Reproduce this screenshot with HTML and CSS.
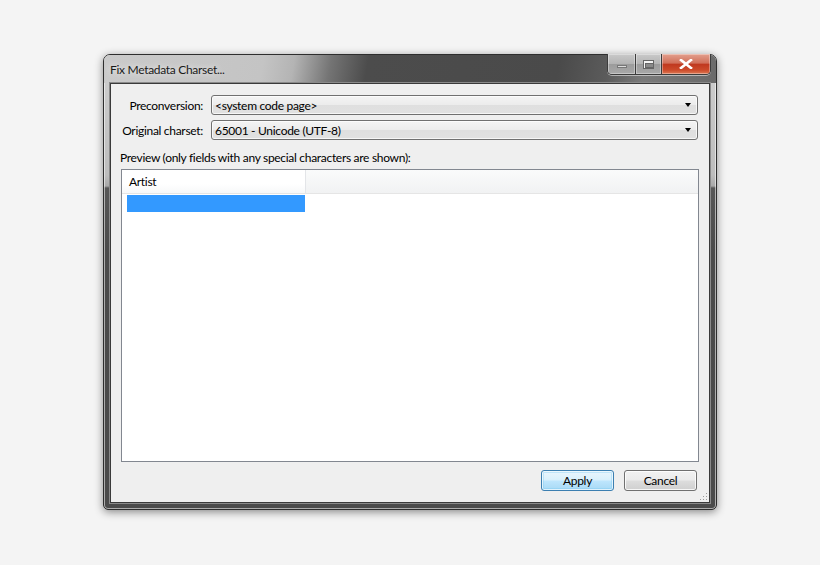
FILE: index.html
```html
<!DOCTYPE html>
<html>
<head>
<meta charset="utf-8">
<link rel="stylesheet" href="styles.css">
</head>
<body>
<div class="window">
  <div class="titlebar">
    <div class="title">Fix Metadata Charset...</div>
    <div class="caption-buttons">
      <div class="cap cap-min"><span class="min-glyph"></span></div>
      <div class="cap cap-max"><span class="max-glyph"></span></div>
      <div class="cap cap-close">
        <svg width="14" height="10" viewBox="0 0 14 10"><path d="M2 1 L12 9 M12 1 L2 9" stroke="#ffffff" stroke-width="2.6" stroke-linecap="square"/></svg>
      </div>
    </div>
  </div>
  <div class="client">
    <div class="form">
      <label class="lbl">Preconversion:</label>
      <div class="combo"><span>&lt;system code page&gt;</span><span class="arrow"></span></div>
      <label class="lbl">Original charset:</label>
      <div class="combo"><span>65001 - Unicode (UTF-8)</span><span class="arrow"></span></div>
    </div>
    <div class="preview-label">Preview (only fields with any special characters are shown):</div>
    <div class="list">
      <div class="list-header">
        <div class="col col-artist">Artist</div>
        <div class="col col-rest"></div>
      </div>
      <div class="list-body">
        <div class="row selected"><div class="cell"></div></div>
      </div>
    </div>
    <div class="buttons">
      <button class="btn btn-default">Apply</button>
      <button class="btn">Cancel</button>
    </div>
    <div class="grip">
      <svg width="8" height="8" viewBox="0 0 8 8">
        <rect x="6" y="0" width="1" height="1" fill="#9a9a9a"/>
        <rect x="3" y="3" width="1" height="1" fill="#9a9a9a"/>
        <rect x="6" y="3" width="1" height="1" fill="#9a9a9a"/>
        <rect x="0" y="6" width="1" height="1" fill="#9a9a9a"/>
        <rect x="3" y="6" width="1" height="1" fill="#9a9a9a"/>
        <rect x="6" y="6" width="1" height="1" fill="#9a9a9a"/>
      </svg>
    </div>
  </div>
</div>
</body>
</html>
```

FILE: styles.css
```css
* { box-sizing: border-box; }

body {
  margin: 0;
  width: 820px;
  height: 565px;
  background: #f4f4f4;
  font-family: Lato, "Open Sans", sans-serif;
  font-size: 12px;
  letter-spacing: -0.3px;
  color: #000;
  overflow: hidden;
}

.window {
  margin: 54px 0 0 103px;
  width: 614px;
  height: 456px;
  border: 1px solid #2e2e2e;
  border-radius: 7px 7px 5px 5px;
  padding: 0 6px 6px 6px;
  background:
    linear-gradient(to bottom, #cfcfcf 0px, #bdbdbd 120px, #a9a9a9 131px, #575757 133px, #4a4a4a 200px, #4b4b4b 100%);
  box-shadow: 0 0 0 1px rgba(255,255,255,0.55) inset, 0 2px 9px rgba(0,0,0,0.45);
  display: flex;
  flex-direction: column;
}

.titlebar {
  height: 28px;
  margin: 0 -6px;
  padding: 0 0 0 6px;
  display: flex;
  justify-content: space-between;
  align-items: flex-start;
  border-radius: 6px 6px 0 0;
  background:
    linear-gradient(100deg, #cacaca 0%, #c4c4c4 26%, #b4b4b4 31%, #747474 37%, #4c4c4c 43%, #4a4a4a 74%, #5b5b5b 82%, #7a7a7a 88%, #6a6a6a 100%);
}

.title {
  margin-top: 7px;
  font-size: 12px;
  color: #1a1a1a;
  text-shadow: 0 0 6px rgba(255,255,255,0.9);
}

.caption-buttons {
  display: flex;
  margin-top: -1px;
  margin-right: 5px;
  height: 21px;
  border: 1px solid #3c3c3c;
  border-top: none;
  border-radius: 0 0 5px 5px;
  overflow: hidden;
  box-shadow: 0 1px 0 rgba(255,255,255,0.5);
}

.cap {
  height: 100%;
  display: flex;
  align-items: center;
  justify-content: center;
  box-shadow: inset 0 0 0 1px rgba(255,255,255,0.35);
}

.cap-min {
  width: 28px;
  border-right: 1px solid #3c3c3c;
  background: linear-gradient(to bottom, #c9c9c9 0%, #b4b4b4 48%, #9c9c9c 52%, #a8a8a8 100%);
}

.cap-max {
  width: 26px;
  border-right: 1px solid #3c3c3c;
  background: linear-gradient(to bottom, #c9c9c9 0%, #b4b4b4 48%, #9c9c9c 52%, #a8a8a8 100%);
}

.cap-close {
  width: 48px;
  background: linear-gradient(to bottom, #e3a08e 0%, #d1705a 45%, #c0391f 52%, #cc4a2a 80%, #dc7a55 100%);
}

.min-glyph {
  display: block;
  width: 10px;
  height: 3px;
  margin-top: 4px;
  background: #dcdcdc;
  border: 1px solid #777;
}

.max-glyph {
  display: block;
  width: 11px;
  height: 9px;
  border: 1px solid #666;
  background: #f4f4f4;
  position: relative;
}
.max-glyph::after {
  content: "";
  position: absolute;
  left: 1px;
  top: 2px;
  width: 7px;
  height: 3px;
  background: #8a8a8a;
  border: 1px solid #666;
}

.client {
  flex: 1;
  position: relative;
  background: #efefef;
  border: 1px solid #3a3a3a;
  padding: 11px 10px 0 10px;
  display: flex;
  flex-direction: column;
  box-shadow: 0 0 0 1px #8a8a8a;
}

.form {
  display: grid;
  grid-template-columns: 82px 1fr;
  column-gap: 8px;
  row-gap: 5px;
  align-items: center;
  margin-right: 1px;
}

.lbl {
  text-align: right;
  white-space: nowrap;
}

.combo {
  height: 20px;
  border: 1px solid #707070;
  border-radius: 3px;
  background: linear-gradient(to bottom, #f4f4f4 0%, #ececec 48%, #dfdfdf 52%, #e1e1e1 100%);
  display: flex;
  align-items: center;
  justify-content: space-between;
  padding: 0 6px 0 3px;
  box-shadow: inset 0 0 0 1px rgba(255,255,255,0.7);
}

.arrow {
  width: 0;
  height: 0;
  border-left: 3.5px solid transparent;
  border-right: 3.5px solid transparent;
  border-top: 4px solid #000;
}

.preview-label {
  margin: 10px 0 3px -1px;
  line-height: 16px;
}

.list {
  height: 293px;
  border: 1px solid #828790;
  background: #fff;
  display: flex;
  flex-direction: column;
}

.list-header {
  height: 24px;
  display: flex;
  border-bottom: 1px solid #e5e5e5;
}

.col {
  height: 100%;
  display: flex;
  align-items: center;
}

.col-artist {
  width: 184px;
  padding-left: 7px;
  background: linear-gradient(to bottom, #ffffff 0%, #ffffff 60%, #f7f8f9 100%);
  border-right: 1px solid #e3e5e8;
}

.col-rest {
  flex: 1;
  background: linear-gradient(to bottom, #fafbfb 0%, #f1f2f3 100%);
}

.list-body {
  padding: 1px 0 0 5px;
}

.row {
  height: 17px;
}

.row.selected .cell {
  width: 178px;
  height: 17px;
  background: #3399ff;
}

.buttons {
  display: flex;
  justify-content: flex-end;
  gap: 10px;
  margin-top: 8px;
  margin-right: 2px;
}

.btn {
  width: 73px;
  height: 21px;
  font-family: Lato, "Open Sans", sans-serif;
  font-size: 12px;
  letter-spacing: -0.3px;
  color: #000;
  border: 1px solid #707070;
  border-radius: 3px;
  background: linear-gradient(to bottom, #f2f2f2 0%, #ebebeb 48%, #dddddd 52%, #cfcfcf 100%);
  box-shadow: inset 0 0 0 1px rgba(255,255,255,0.8);
  padding: 0;
}

.btn-default {
  border-color: #3c7fb1;
  background: linear-gradient(to bottom, #eaf6fd 0%, #d9f0fc 48%, #bee6fd 52%, #a7d9f5 100%);
  box-shadow: inset 0 0 0 1px rgba(255,255,255,0.7), inset 0 0 0 2px rgba(120,200,240,0.35);
}

.grip {
  position: absolute;
  right: 1px;
  bottom: 1px;
  width: 8px;
  height: 8px;
  display: flex;
}
```
